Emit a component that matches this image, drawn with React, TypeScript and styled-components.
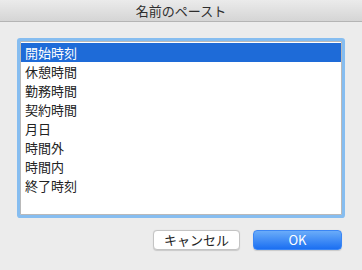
import styled, { createGlobalStyle } from "styled-components";

const GlobalStyle = createGlobalStyle`
  html, body {
    margin: 0;
    padding: 0;
    background: #ececec;
  }
  body {
    font-family: "Noto Sans CJK JP", "Liberation Sans", sans-serif;
  }
`;

const Dialog = styled.div`
  width: 362px;
  height: 270px;
  display: flex;
  flex-direction: column;
  background: #ececec;
`;

const TitleBar = styled.div`
  height: 21px;
  display: flex;
  align-items: center;
  justify-content: center;
  background: linear-gradient(#ebebeb, #d5d5d5);
  border-bottom: 1px solid #b4b4b4;
  font-size: 13px;
  color: #2e2e2e;
`;

const Body = styled.div`
  padding: 19px 20px 0;
  display: flex;
  flex-direction: column;
`;

const ListBox = styled.ul`
  margin: 0;
  padding: 1px 0 0;
  list-style: none;
  height: 171px;
  background: #fff;
  border: 1px solid #b9b9b9;
  box-shadow: 0 0 0 3px #86bdf0;
  border-radius: 1px;
`;

const Item = styled.li<{ $selected?: boolean }>`
  height: 19px;
  line-height: 19px;
  padding-left: 4px;
  font-size: 13px;
  color: ${({ $selected }) => ($selected ? "#fff" : "#222")};
  background: ${({ $selected }) => ($selected ? "#1e6bd8" : "transparent")};
`;

const Buttons = styled.div`
  margin-top: 15px;
  display: flex;
  justify-content: flex-end;
  gap: 13px;
`;

const Button = styled.button<{ $primary?: boolean }>`
  height: 20px;
  width: ${({ $primary }) => ($primary ? "89px" : "87px")};
  padding: 0;
  border-radius: 4px;
  font-family: "Noto Sans CJK JP", "Liberation Sans", sans-serif;
  font-size: 13px;
  line-height: 18px;
  border: 1px solid ${({ $primary }) => ($primary ? "#3b86f4" : "#c4c4c4")};
  color: ${({ $primary }) => ($primary ? "#fff" : "#222")};
  background: ${({ $primary }) =>
    $primary ? "linear-gradient(#6aacf9, #1b6ff2)" : "#fff"};
  box-shadow: 0 0.5px 1px rgba(0, 0, 0, 0.15);
`;

const items = [
  "開始時刻",
  "休憩時間",
  "勤務時間",
  "契約時間",
  "月日",
  "時間外",
  "時間内",
  "終了時刻",
];

export default function App() {
  return (
    <Dialog>
      <GlobalStyle />
      <TitleBar>名前のペースト</TitleBar>
      <Body>
        <ListBox>
          {items.map((item, i) => (
            <Item key={item} $selected={i === 0}>
              {item}
            </Item>
          ))}
        </ListBox>
        <Buttons>
          <Button>キャンセル</Button>
          <Button $primary>OK</Button>
        </Buttons>
      </Body>
    </Dialog>
  );
}
